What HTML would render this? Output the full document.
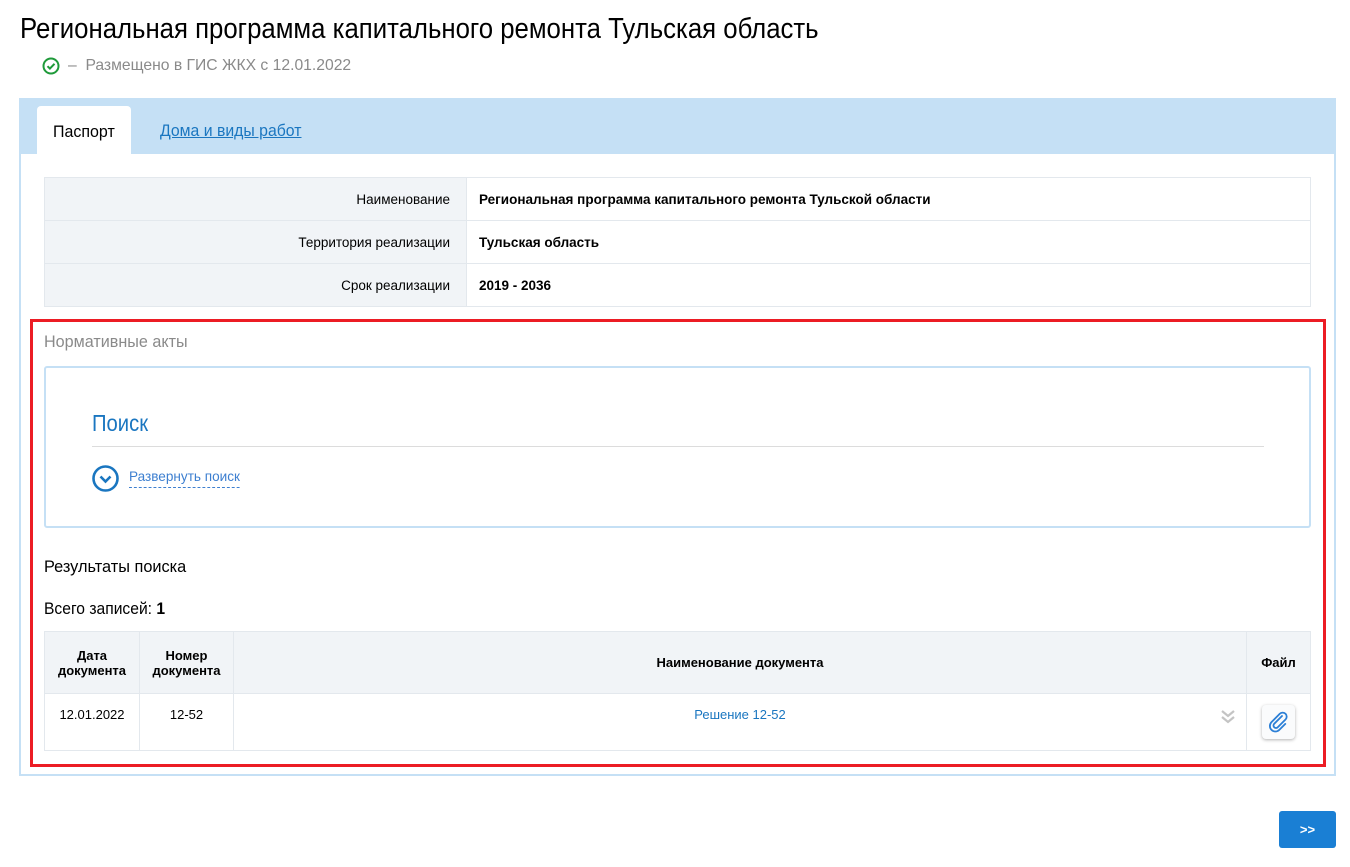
<!DOCTYPE html>
<html><head><meta charset="utf-8"><style>
*{margin:0;padding:0;box-sizing:border-box}
body{width:1350px;height:867px;background:#fff;font-family:"Liberation Sans",sans-serif;position:relative;overflow:hidden;color:#000}
.a{position:absolute;white-space:nowrap;transform-origin:0 0}
table{border-collapse:collapse}
td{border:1px solid #e3e8ed}
</style></head><body>
<div class="a" style="left:20px;top:13px;font-size:29px;transform:scaleX(0.888)">Региональная программа капитального ремонта Тульская область</div>
<svg class="a" style="left:42px;top:57px" width="18" height="18" viewBox="0 0 18 18"><circle cx="9" cy="9" r="7.5" fill="none" stroke="#1f9a3a" stroke-width="2"/><path d="M5.5 9.2l2.4 2.4 4.6-4.8" fill="none" stroke="#1f9a3a" stroke-width="2"/></svg>
<div class="a" style="left:68px;top:57px;font-size:15.7px;color:#8a8a8a">–&nbsp; Размещено в ГИС ЖКХ с 12.01.2022</div>

<div class="a" style="left:19px;top:98px;width:1317px;height:678px;border:2px solid #c5e0f5;border-top:none;background:#fff"></div>
<div class="a" style="left:19px;top:98px;width:1317px;height:56px;background:#c5e0f5"></div>
<div class="a" style="left:37px;top:106px;width:94px;height:48px;background:#fff;border-radius:4px 4px 0 0"></div>
<div class="a" style="left:53px;top:122px;font-size:17px;transform:scaleX(0.94)">Паспорт</div>
<div class="a" style="left:160px;top:121px;font-size:17px;color:#1a76c0;text-decoration:underline;transform:scaleX(0.93)">Дома и виды работ</div>

<table class="a" style="left:44px;top:177px;width:1267px;font-size:13.5px;white-space:normal">
<tr style="height:43px"><td style="width:422px;background:#f1f4f7;text-align:right;padding-right:16px">Наименование</td><td style="padding-left:12px;font-weight:bold">Региональная программа капитального ремонта Тульской области</td></tr>
<tr style="height:43px"><td style="background:#f1f4f7;text-align:right;padding-right:16px">Территория реализации</td><td style="padding-left:12px;font-weight:bold">Тульская область</td></tr>
<tr style="height:43px"><td style="background:#f1f4f7;text-align:right;padding-right:16px">Срок реализации</td><td style="padding-left:12px;font-weight:bold">2019 - 2036</td></tr>
</table>

<div class="a" style="left:30px;top:319px;width:1296px;height:448px;border:3px solid #ec1c24"></div>
<div class="a" style="left:44px;top:332px;font-size:17px;color:#8a8a8a;transform:scaleX(0.95)">Нормативные акты</div>
<div class="a" style="left:44px;top:366px;width:1267px;height:162px;border:2px solid #c5e0f5;border-radius:3px"></div>
<div class="a" style="left:92px;top:410px;font-size:23px;color:#1a76c0;transform:scaleX(0.88)">Поиск</div>
<div class="a" style="left:92px;top:446px;width:1172px;height:1px;background:#dcdcdc"></div>
<svg class="a" style="left:92px;top:465px" width="27" height="27" viewBox="0 0 27 27"><circle cx="13.5" cy="13.5" r="12" fill="none" stroke="#1a76c0" stroke-width="2.6"/><path d="M8.5 11.5l5 5 5-5" fill="none" stroke="#1a76c0" stroke-width="2.6"/></svg>
<div class="a" style="left:129px;top:468px;font-size:14px;color:#3d7fd0;border-bottom:1px dashed #3d7fd0;padding-bottom:3px;transform:scaleX(0.97)">Развернуть поиск</div>

<div class="a" style="left:44px;top:557px;font-size:17px;transform:scaleX(0.96)">Результаты поиска</div>
<div class="a" style="left:44px;top:599px;font-size:17px;transform:scaleX(0.92)">Всего записей: <b>1</b></div>

<table class="a" style="left:44px;top:631px;width:1267px;font-size:13px;text-align:center;white-space:normal">
<tr style="height:62px;background:#f1f4f7;font-weight:bold"><td style="width:95px">Дата<br>документа</td><td style="width:94px">Номер<br>документа</td><td>Наименование документа</td><td style="width:64px">Файл</td></tr>
<tr style="height:57px"><td style="vertical-align:top;padding-top:13px">12.01.2022</td><td style="vertical-align:top;padding-top:13px">12-52</td><td style="vertical-align:top;padding-top:13px;color:#1a76c0;position:relative">Решение 12-52<svg style="position:absolute;right:10px;top:14px" width="16" height="16" viewBox="0 0 16 16"><path d="M2 3l6 5 6-5M2 9l6 5 6-5" fill="none" stroke="#c4c4c4" stroke-width="2.2"/></svg></td><td><div style="margin:0 auto;width:33px;height:34px;border-radius:4px;background:#fafbfc;box-shadow:0 1px 3px rgba(0,0,0,.3);display:flex;align-items:center;justify-content:center"><svg width="22" height="22" viewBox="0 0 22 22"><path d="M14 5l-8 8a2.5 2.5 0 0 0 3.5 3.5l8-8a4 4 0 0 0-5.7-5.7l-8.3 8.3a5.5 5.5 0 0 0 7.8 7.8l6-6" fill="none" stroke="#2b7fd6" stroke-width="1.8" stroke-linecap="round"/></svg></div></td></tr>
</table>

<div class="a" style="left:1279px;top:811px;width:57px;height:37px;background:#1a7fd4;border-radius:3px;color:#fff;font-size:13px;font-weight:bold;text-align:center;line-height:37px">&gt;&gt;</div>
</body></html>
